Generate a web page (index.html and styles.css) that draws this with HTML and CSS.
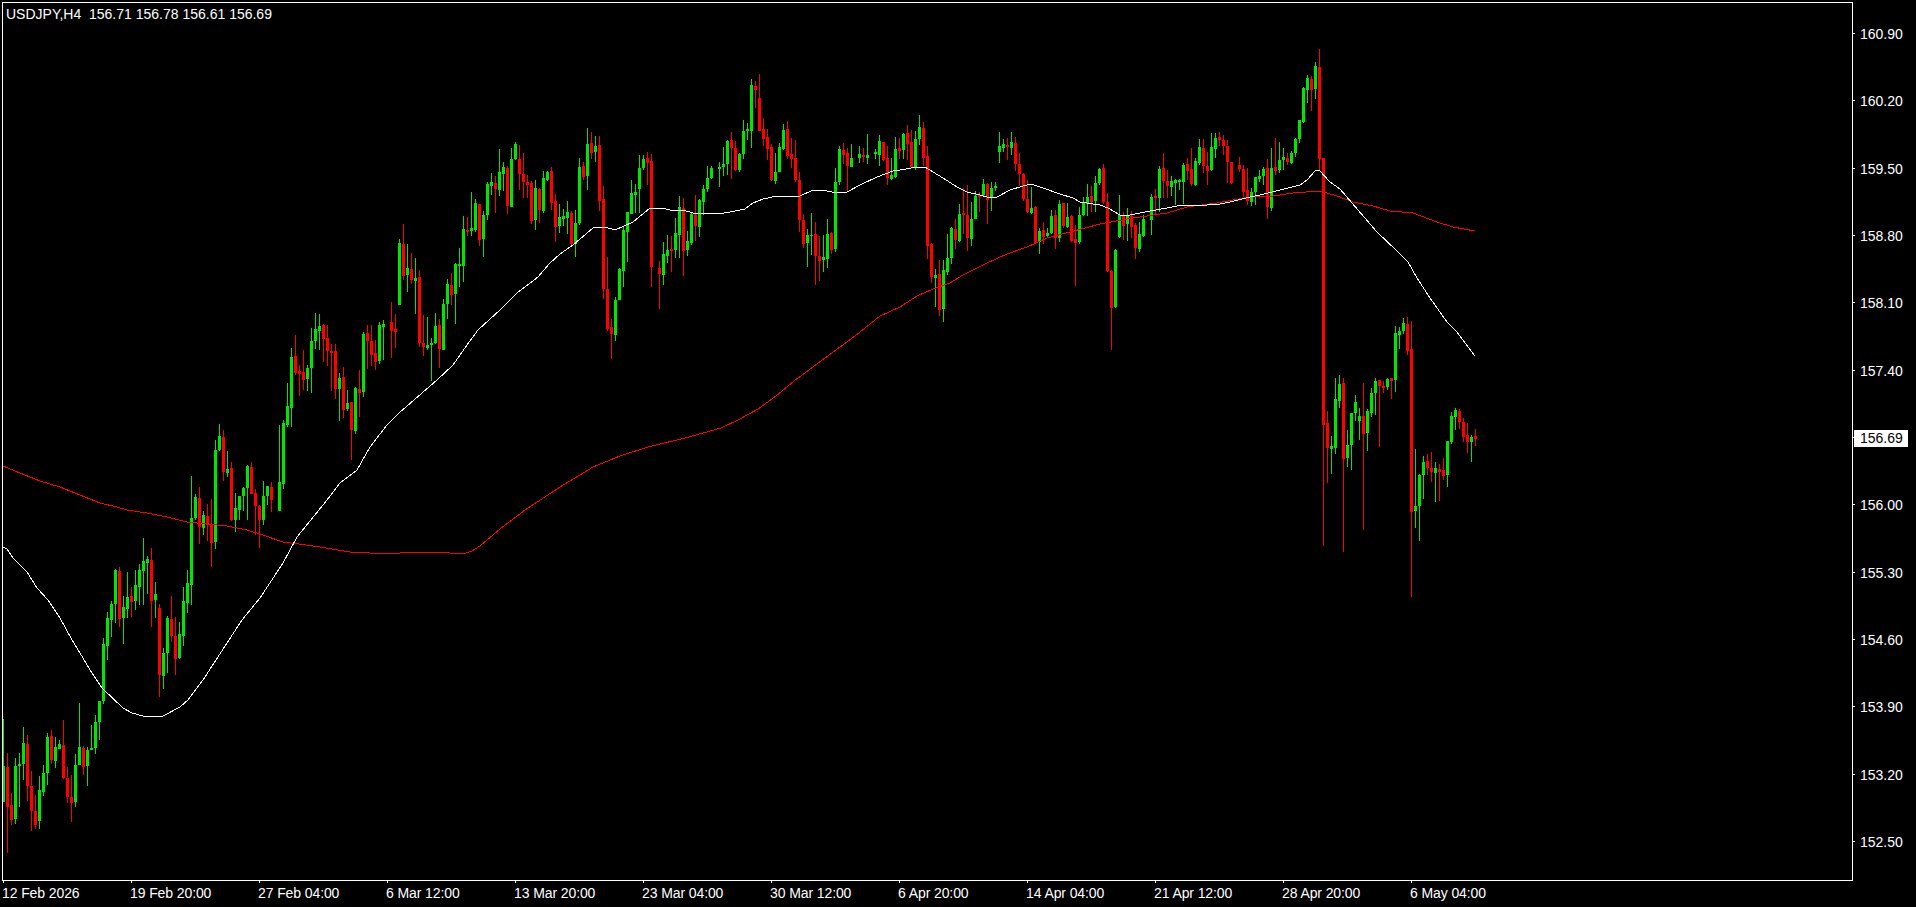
FILE: index.html
```html
<!DOCTYPE html>
<html lang="en">
<head>
<meta charset="utf-8">
<title>USDJPY,H4</title>
<link rel="stylesheet" href="styles.css">
</head>
<body>
<main class="terminal">
  <section class="pane">
    <div class="legend">USDJPY,H4  156.71 156.78 156.61 156.69</div>
    <svg class="plot" viewBox="3 3 1849 877" width="1849" height="877" aria-hidden="true">
      <path id="bulls" class="bull" d=""></path>
      <path id="bears" class="bear" d=""></path>
      <polyline class="ma ma-slow" points="3,466 20,473 40,481 60,487 80,495 100,503 117,507 127,510 147,513 167,517 187,522 207,524 227,526 247,530 263,535 283,542 299,544 320,547 350,552 370,553 400,553 428,552 450,553 466,553 472,551 480,546 500,529 525,510 560,487 593,467 620,456 648,447 685,438 721,428 740,419 758,409 776,396 794,381 825,358 855,336 880,316 900,307 917,296 933,289 950,283 963,275 987,263 1007,254 1027,247 1047,238 1070,232 1100,224 1133,218 1167,213 1187,207 1217,203 1233,200 1250,197 1273,196 1293,193 1320,191 1337,196 1353,202 1373,206 1390,211 1413,213 1437,222 1453,227 1475,231"></polyline>
      <polyline class="ma ma-fast" points="3,547 7,549 13,558 27,572 37,588 48,600 60,618 72,640 80,653 92,673 102,688 123,708 132,713 143,716 163,716 180,707 188,700 203,680 227,643 242,620 260,598 283,563 297,537 327,500 340,483 357,470 370,447 387,425 399,413 437,380 453,365 467,345 478,330 500,310 517,293 538,277 550,263 560,254 573,245 593,228 605,227 615,230 633,222 650,208 662,208 670,210 683,210 693,213 703,214 713,213 718,214 730,212 745,209 753,203 763,199 777,196 793,196 800,196 813,190 822,190 832,192 847,192 860,185 877,177 893,171 900,170 917,167 925,167 933,172 943,178 957,187 967,192 980,195 990,198 997,197 1010,190 1023,186 1031,184 1043,188 1060,194 1073,198 1080,202 1100,205 1108,208 1120,215 1130,215 1150,211 1167,208 1177,206 1187,205 1207,205 1220,204 1230,202 1250,197 1260,195 1280,190 1300,185 1307,180 1315,171 1319,170 1330,182 1340,189 1358,210 1377,232 1397,251 1408,262 1417,278 1430,298 1447,322 1457,332 1475,356"></polyline>
    </svg>
  </section>
  <aside class="price-axis">
    <div class="price">160.90</div>
    <div class="price">160.20</div>
    <div class="price">159.50</div>
    <div class="price">158.80</div>
    <div class="price">158.10</div>
    <div class="price">157.40</div>
    <div class="price"><span class="current">156.69</span></div>
    <div class="price">156.00</div>
    <div class="price">155.30</div>
    <div class="price">154.60</div>
    <div class="price">153.90</div>
    <div class="price">153.20</div>
    <div class="price">152.50</div>
  </aside>
  <footer class="time-axis">
    <div class="time">12 Feb 2026</div>
    <div class="time">19 Feb 20:00</div>
    <div class="time">27 Feb 04:00</div>
    <div class="time">6 Mar 12:00</div>
    <div class="time">13 Mar 20:00</div>
    <div class="time">23 Mar 04:00</div>
    <div class="time">30 Mar 12:00</div>
    <div class="time">6 Apr 20:00</div>
    <div class="time">14 Apr 04:00</div>
    <div class="time">21 Apr 12:00</div>
    <div class="time">28 Apr 20:00</div>
    <div class="time">6 May 04:00</div>
  </footer>
</main>
<script src="chart.js"></script>
</body>
</html>
```
FILE: styles.css
```css
html, body {
  margin: 0;
  height: 100%;
  background: #000;
  overflow: hidden;
}

.terminal {
  display: grid;
  grid-template-columns: 1851px 1fr;
  grid-template-rows: 879px 1fr;
  height: 905px;
  padding: 2px 0 0 2px;
  font: 14px/16px "Liberation Sans", Arial, sans-serif;
  color: #fff;
}

.pane {
  position: relative;
  border: 1px solid #fff;
  overflow: hidden;
}

.legend {
  position: absolute;
  top: 3px;
  left: 3px;
  white-space: pre;
}

.plot {
  display: block;
}

.bull, .bear {
  shape-rendering: crispEdges;
}

.bull { fill: #00e600; }
.bear { fill: #ff0000; }

.ma {
  fill: none;
  stroke-width: 1;
  shape-rendering: crispEdges;
}

.ma-fast { stroke: #fff; }
.ma-slow { stroke: #ff0000; }

.price-axis {
  display: flex;
  flex-direction: column;
  gap: 47.34px;
  padding-top: 22px;
}

.price {
  position: relative;
  height: 20px;
  padding-left: 7px;
  line-height: 20px;
}

.price::before {
  content: "";
  position: absolute;
  left: 0;
  top: 9px;
  width: 2px;
  height: 1px;
  background: #fff;
}

.current {
  position: absolute;
  left: 1px;
  top: 2px;
  width: 48px;
  height: 17px;
  padding-left: 6px;
  line-height: 17px;
  background: #fff;
  color: #000;
}

.time-axis {
  display: flex;
  grid-column: 1 / -1;
  padding-left: 1px;
}

.time {
  position: relative;
  flex: 0 0 128px;
  padding-top: 4px;
  text-indent: -1px;
  letter-spacing: -0.1px;
  white-space: nowrap;
}

.time::before {
  content: "";
  position: absolute;
  left: 0;
  top: 0;
  width: 1px;
  height: 2px;
  background: #fff;
}
```
FILE: chart.js
```js
// Candles in screen rows: colour + high,bodyTop,bodyBottom,low. A dash is an empty slot.
var candles = `
g719,766,802,802 r753,767,807,853 r793,805,820,825 g758,766,819,824 g753,764,766,807 g727,743,764,780 r735,744,786,801 r771,786,811,831 r795,811,825,829 g776,790,821,829
g765,773,792,796 g733,737,773,785 r730,736,760,764 g737,747,761,768 g740,744,749,749 r720,745,778,779 r767,778,797,803 r775,797,803,822 g754,765,802,807 g703,747,765,765
r746,748,767,775 g747,750,766,786 g725,748,750,750 g715,722,748,754 g701,701,722,740 g638,644,701,704 g612,618,646,660 g601,604,620,637 g569,570,604,623 r567,571,619,627
g596,607,618,644 g572,597,609,618 r587,596,602,617 g570,585,601,610 g564,570,587,605 g538,561,571,605 g556,559,563,594 r548,560,601,627 g582,594,600,618 r604,608,675,697
g648,653,676,689 g616,618,653,673 r596,619,636,642 r617,636,659,675 g622,634,658,659 g587,601,636,646 g570,583,603,613 g476,518,585,605 g494,497,518,520 r487,498,527,544
g511,515,528,535 r504,516,525,541 r499,524,543,567 g440,450,542,549 g424,436,450,451 r430,437,472,481 g451,469,473,477 r462,468,520,521 g493,508,520,532 g496,496,510,520
g487,488,496,511 g465,466,488,520 r462,467,494,494 r489,493,506,535 r505,506,520,548 g481,496,520,525 g486,486,496,505 r482,487,500,512 - g425,482,511,511
g420,423,484,489 g383,406,425,427 g348,357,408,427 r335,356,373,375 r365,371,374,396 r350,372,380,390 g365,368,379,391 g328,341,368,393 g313,329,341,349 g314,326,331,350
r324,325,339,362 r325,338,351,366 r344,351,353,391 r344,351,389,399 g373,378,389,421 r367,377,410,418 g390,403,409,411 r402,402,430,460 g387,388,431,434 r370,389,393,417
g332,334,392,397 r325,333,341,369 r325,341,355,366 r340,353,362,370 g322,325,361,364 g320,324,327,360 - r302,322,331,358 r314,329,332,348 g239,243,305,305
r224,244,276,280 g244,268,275,292 r253,269,280,284 g258,278,281,314 r270,277,343,347 r315,343,347,356 g317,345,348,350 g338,343,345,381 g313,326,343,344 r319,325,349,368
g299,304,350,350 g279,284,304,319 r273,285,295,305 g263,264,294,324 g248,264,266,287 g216,229,266,282 r217,230,232,236 g192,228,231,236 g199,203,230,232 r204,204,240,246
g211,215,239,257 g182,184,215,220 g173,182,186,195 r176,183,189,213 g149,172,190,196 g162,167,174,191 r166,168,206,214 g148,159,207,207 g142,144,159,160 r145,159,174,190
r153,174,182,198 r175,182,185,198 r181,183,221,224 g180,188,220,230 r188,189,210,223 g171,178,211,213 g171,172,180,181 r167,171,203,210 r194,201,227,242 g204,217,226,233
g209,216,219,226 g201,212,218,234 r211,213,244,245 g210,223,244,257 g158,167,223,225 r162,166,177,180 g128,144,176,190 r132,143,153,159 g136,146,152,162 r136,145,201,211
r186,199,289,299 r257,289,329,331 r319,327,334,359 g297,300,335,341 g268,269,300,300 g226,230,271,287 g212,212,232,262 g180,193,214,214 g184,192,195,213 g155,168,189,213
g155,159,168,170 r152,158,163,185 r154,161,267,287 - r261,268,274,309 g242,254,275,285 g235,250,256,263 r236,249,251,272 g218,233,250,258 g196,207,235,258
r198,208,251,276 g231,241,250,256 g213,214,243,245 r195,215,226,241 g199,200,227,237 g185,189,202,215 g166,178,189,192 g166,168,178,179 - g162,167,169,187
g147,164,167,176 g140,141,164,175 r132,140,148,179 r141,148,170,171 g153,154,170,172 g120,131,154,159 g123,129,131,140 g79,85,131,148 r81,86,90,108 r74,98,131,131
r118,129,139,146 r129,137,149,160 r144,147,180,181 g153,172,181,184 g143,147,172,172 g124,130,149,150 r121,129,156,159 r138,154,159,168 r140,158,180,182 r172,180,220,232
r214,220,244,248 g229,235,243,267 g213,235,236,255 r222,234,256,285 r236,256,261,281 g235,257,260,272 g219,234,259,268 r232,233,250,254 g168,182,249,252 g146,149,182,185
r143,150,155,164 r148,153,166,192 g144,158,167,167 - g146,154,158,163 r148,155,157,162 g134,155,158,164 - g149,152,154,159 g135,141,155,166
r142,142,160,161 r146,158,178,185 g158,175,179,180 g137,149,177,178 r138,148,151,159 g133,134,150,159 r125,133,144,160 r130,142,167,168 g131,139,167,170 g115,127,139,145
r122,128,158,166 r146,156,246,259 r243,244,277,283 g269,275,278,307 r260,274,310,316 g260,270,309,322 g234,258,272,275 g227,228,258,264 r219,229,240,249 g204,214,241,242
r188,213,215,234 r185,215,238,251 g202,219,239,246 g191,196,219,219 r192,195,197,212 g179,184,195,197 r183,184,200,224 g182,188,198,211 g182,186,188,191 g132,146,152,163
g139,144,148,152 r138,145,147,160 g132,142,148,155 r137,143,164,171 r153,164,174,186 r173,174,199,201 r180,199,212,213 g187,208,213,214 r206,207,243,244 g228,231,242,254
r222,230,237,244 g228,233,236,237 g210,216,233,234 r210,215,238,249 g200,204,238,242 r203,203,226,228 g203,217,227,228 r215,216,241,242 r225,239,243,286 g207,215,242,244
g197,203,215,216 g184,197,204,216 r186,196,202,212 g176,183,201,212 g168,169,183,185 r164,168,202,204 r193,202,271,272 r270,271,308,350 g249,250,307,308 g195,215,237,238
r212,215,226,240 g208,215,224,241 r211,216,227,238 r223,225,248,259 g222,234,249,252 g215,219,236,237 - g194,197,220,235 r189,196,198,215 g166,169,198,212
r153,168,181,198 r170,181,186,198 g176,181,187,196 g179,180,183,205 g179,180,182,190 g163,165,182,204 r158,164,171,180 r148,169,184,186 g158,161,185,186 g139,147,163,165
r139,148,166,173 r152,166,171,185 g133,147,170,171 g133,138,149,158 r132,137,140,146 r135,140,146,155 r140,146,162,183 r162,162,183,184 - r157,165,169,172
r165,169,192,197 r168,190,201,205 g188,192,202,206 g177,177,192,205 g170,176,179,182 g167,169,176,185 r159,168,207,219 g148,168,208,211 r138,167,171,175 g142,160,170,173
g148,157,160,170 r153,158,162,165 g151,153,163,164 g138,139,153,157 g120,120,139,143 g87,88,122,123 g75,78,90,103 r76,79,90,111 g62,66,89,99 r49,67,159,170
r158,158,425,546 r411,423,448,483 g436,446,449,474 g378,399,448,454 g375,384,401,408 r378,383,459,552 g430,445,458,467 g413,413,445,470 g395,402,413,421 g408,416,421,440
r383,416,434,530 g409,411,433,451 g388,393,413,417 g378,381,393,415 r380,380,386,447 r381,386,388,393 g378,379,387,390 r378,378,381,399 g326,333,380,392 g327,331,335,349
g318,323,331,334 r317,324,351,355 r321,349,512,597 g449,506,511,528 g474,475,506,541 g456,462,475,499 r454,461,468,475 r452,468,472,482 g462,468,473,502 r464,469,472,501
r458,470,476,480 g441,441,475,487 g412,416,442,444 g408,410,417,430 r409,411,422,429 r418,422,437,442 r423,435,442,453 g435,437,442,462 r429,436,439,446
`.trim().split(/\s+/);

var FIRST_X = 3, STEP = 4;
var paths = { g: "", r: "" };

function box(x, y, w, h) {
  return "M" + x + " " + y + "h" + w + "v" + h + "h" + (-w) + "z";
}

candles.forEach(function (item, i) {
  if (item === "-") return;
  var v = item.slice(1).split(",").map(Number);
  var x = FIRST_X + STEP * i;
  var d = box(x, v[0], 1, Math.max(v[3] - v[0], 1));
  d += box(x - 1, v[1], 3, Math.max(v[2] - v[1], 1));
  paths[item[0]] += d;
});

document.getElementById("bulls").setAttribute("d", paths.g);
document.getElementById("bears").setAttribute("d", paths.r);
```
